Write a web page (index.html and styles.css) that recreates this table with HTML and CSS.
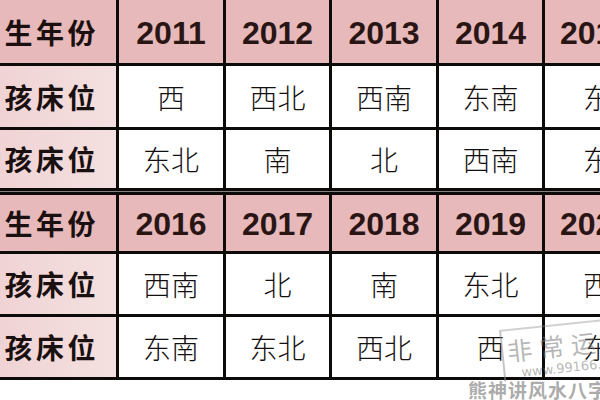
FILE: index.html
```html
<!DOCTYPE html>
<html lang="zh">
<head>
<meta charset="utf-8">
<title>床位方位表</title>
<link rel="stylesheet" href="styles.css">
</head>
<body>
<div class="sheet">
  <div class="grid t1">
    <div class="c lab head">出生年份</div>
    <div class="c yr">2011</div>
    <div class="c yr">2012</div>
    <div class="c yr">2013</div>
    <div class="c yr">2014</div>
    <div class="c yr last">2015</div>

    <div class="c lab">男孩床位</div>
    <div class="c d">西</div>
    <div class="c d">西北</div>
    <div class="c d">西南</div>
    <div class="c d">东南</div>
    <div class="c d last">东南</div>

    <div class="c lab">女孩床位</div>
    <div class="c d">东北</div>
    <div class="c d">南</div>
    <div class="c d">北</div>
    <div class="c d">西南</div>
    <div class="c d last">东北</div>
  </div>
  <div class="sep"></div>
  <div class="grid t2">
    <div class="c lab head">出生年份</div>
    <div class="c yr">2016</div>
    <div class="c yr">2017</div>
    <div class="c yr">2018</div>
    <div class="c yr">2019</div>
    <div class="c yr last">2020</div>

    <div class="c lab">男孩床位</div>
    <div class="c d">西南</div>
    <div class="c d">北</div>
    <div class="c d">南</div>
    <div class="c d">东北</div>
    <div class="c d last">西北</div>

    <div class="c lab">女孩床位</div>
    <div class="c d">东南</div>
    <div class="c d">东北</div>
    <div class="c d">西北</div>
    <div class="c d">西</div>
    <div class="c d last">东南</div>
  </div>
</div>

<div class="stamp">
  <div class="stamp-title">非常运势</div>
  <div class="stamp-url">www.99166.com</div>
</div>
<div class="wm-text">熊神讲风水八字</div>
</body>
</html>
```

FILE: styles.css
```css
html, body {
  margin: 0;
  padding: 0;
  background: #ffffff;
}

body {
  width: 600px;
  height: 400px;
  overflow: hidden;
  position: relative;
}

.sheet {
  margin-left: -30px;
  width: 740px;
  display: flex;
  flex-direction: column;
}

.grid {
  display: grid;
  grid-template-columns: 146px 104px 103px 104px 103px 160px;
  column-gap: 3px;
  row-gap: 3px;
  background: #0d0a0a;
}

.t1 {
  grid-template-rows: 63px 61px 58px;
  padding-bottom: 3px;
}

.t2 {
  grid-template-rows: 56px 60px 60px;
  padding-top: 3px;
  padding-bottom: 3px;
}

.sep {
  height: 1px;
  background: #8a7f80;
}

.c {
  display: flex;
  align-items: center;
  justify-content: center;
  background: #ffffff;
}

.lab {
  justify-content: flex-end;
  padding-right: 17px;
  background: linear-gradient(90deg, #efd0d1 0%, #f4e0e0 100%);
  font-family: "Noto Sans CJK SC", "Noto Sans", sans-serif;
  font-weight: 700;
  font-size: 28px;
  letter-spacing: 3.5px;
  color: #1a1010;
}

.lab.head {
  background: #e7b9ba;
}

.yr {
  background: #e7b9ba;
  font-family: "Liberation Sans", Arial, sans-serif;
  font-weight: 700;
  font-size: 32px;
  color: #2a1515;
  padding-top: 2px;
}

.t1 .yr {
  padding-top: 4px;
}

.d {
  font-family: "Noto Sans CJK SC", "Noto Sans", sans-serif;
  font-weight: 300;
  font-size: 28px;
  color: #151010;
}

.yr.last {
  justify-content: flex-start;
  padding-left: 15px;
}

.d.last {
  justify-content: flex-start;
  padding-left: 38px;
}

/* watermark overlay */
.stamp {
  position: absolute;
  left: 499px;
  top: 330px;
  width: 130px;
  height: 50px;
  border-left: 2px solid rgba(140, 140, 140, 0.5);
  border-top: 2px solid rgba(140, 140, 140, 0.4);
  transform: rotate(-6deg);
  transform-origin: left top;
  font-family: "Noto Sans CJK SC", "Noto Sans", sans-serif;
  color: rgba(120, 120, 120, 0.55);
  display: flex;
  flex-direction: column;
  padding-left: 4px;
}

.stamp-title {
  font-size: 25px;
  line-height: 30px;
  letter-spacing: 7px;
  margin-top: 4px;
}

.stamp-url {
  font-family: "DejaVu Sans", sans-serif;
  font-size: 13px;
  line-height: 14px;
  margin-top: 2px;
  padding-left: 12px;
}

.wm-text {
  position: absolute;
  left: 468px;
  top: 379px;
  font-family: "Noto Sans CJK SC", "Noto Sans", sans-serif;
  font-weight: 700;
  font-size: 19px;
  line-height: 22px;
  letter-spacing: 1px;
  color: rgba(135, 135, 135, 0.7);
  white-space: nowrap;
}
```
